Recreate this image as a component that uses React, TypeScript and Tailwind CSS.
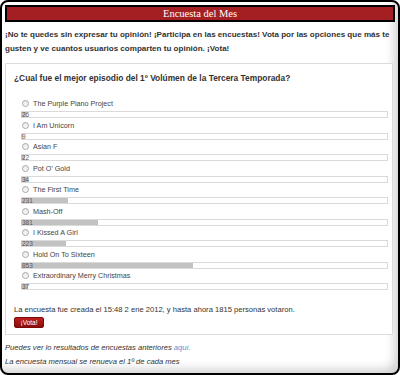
import React from "react";

const options = [
  { label: "The Purple Piano Project", votes: 26 },
  { label: "I Am Unicorn", votes: 9 },
  { label: "Asian F", votes: 22 },
  { label: "Pot O' Gold", votes: 34 },
  { label: "The First Time", votes: 231 },
  { label: "Mash-Off", votes: 381 },
  { label: "I Kissed A Girl", votes: 223 },
  { label: "Hold On To Sixteen", votes: 853 },
  { label: "Extraordinary Merry Christmas", votes: 37 },
];
const total = 1815;

export default function App() {
  return (
    <div className="w-[400px] h-[375px] bg-white" style={{ fontFamily: '"Liberation Sans", Arial, sans-serif' }}>
      <div className="w-[400px] h-[375px] rounded-[8px] border-2 border-black bg-white shadow-[inset_-9px_-9px_10px_-5px_rgba(0,0,0,0.18)] pt-[3px] px-[3px] overflow-hidden">
        <div
          className="h-[17px] border-2 border-black bg-[#a41f22] text-white text-[10.5px] leading-[13px] text-center"
          style={{ fontFamily: '"Liberation Serif", "Times New Roman", serif' }}
        >
          Encuesta del Mes
        </div>
        <p className="mt-[6px] text-[8.05px] leading-[14px] font-bold text-[#333] pr-[4px]">
          ¡No te quedes sin expresar tu opinión! ¡Participa en las encuestas! Vota por las opciones que más te gusten y ve cuantos usuarios comparten tu opinión. ¡Vota!
        </p>
        <div className="mt-[7px] w-[388px] h-[272px] border border-[#dcdcdc] bg-white pl-[8px] pr-[4px]">
          <div className="mt-[8px] text-[8.4px] leading-[12px] font-bold text-[#333]">
            ¿Cual fue el mejor episodio del 1º Volúmen de la Tercera Temporada?
          </div>
          <div className="mt-[14px] pl-[7px]">
            {options.map((o) => (
              <div key={o.label} className="h-[21.5px]">
                <div className="h-[11px] flex items-center pl-[1px]">
                  <span className="w-[7px] h-[7px] rounded-full border border-[#a8a8a8] bg-gradient-to-b from-[#e8e8e8] to-[#fafafa] mr-[4px]" />
                  <span className="text-[7.2px] text-[#444] leading-[11px]">{o.label}</span>
                </div>
                <div className="mt-[2px] w-[367px] h-[7px] border-t border-b border-r border-[#dadada] bg-white relative">
                  <div
                    className="h-full bg-[#c2c2c2]"
                    style={{ width: `${(o.votes / total) * 100}%` }}
                  />
                  <span className="absolute left-[1px] top-[-1px] text-[6.5px] leading-[8px] text-[#555]">{o.votes}</span>
                </div>
              </div>
            ))}
          </div>
          <div className="mt-[12px] text-[7.6px] leading-[12px] text-[#333]">
            La encuesta fue creada el 15:48 2 ene 2012, y hasta ahora 1815 personas votaron.
          </div>
          <button className="mt-[1px] w-[30px] h-[11px] rounded-[2px] bg-gradient-to-b from-[#c0201d] to-[#8a0f0c] border border-[#7a0a08] text-white text-[6.5px] leading-[9px] flex items-center justify-center">
            ¡Vota!
          </button>
        </div>
        <div className="mt-[6px] italic text-[7.6px] leading-[14px] text-[#333]">
          Puedes ver lo resultados de encuestas anteriores <span className="text-[#5b8fd6]">aquí.</span>
        </div>
        <div className="italic text-[7.6px] leading-[14px] text-[#333]">
          La encuesta mensual se renueva el 1º de cada mes
        </div>
      </div>
    </div>
  );
}
